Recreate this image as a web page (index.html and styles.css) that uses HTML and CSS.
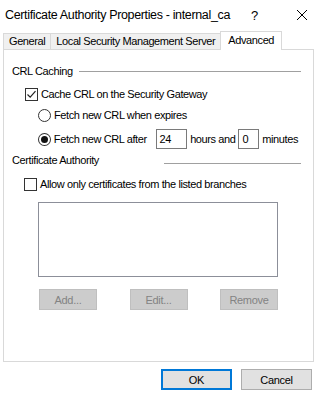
FILE: index.html
```html
<!DOCTYPE html>
<html lang="en">
<head>
  <meta charset="UTF-8">
  <title>Certificate Authority Properties - internal_ca</title>
  <link rel="stylesheet" href="styles.css">
</head>
<body>
  <div class="dialog">
    <div class="titlebar">
      <span class="title">Certificate Authority Properties - internal_ca</span>
      <span class="help">?</span>
      <span class="close">
        <svg width="12" height="12" viewBox="0 0 12 12"><path d="M1 1 L11 11 M11 1 L1 11" stroke="#000" stroke-width="1" fill="none"/></svg>
      </span>
    </div>
    <div class="tabs">
      <div class="tab">General</div>
      <div class="tab">Local Security Management Server</div>
      <div class="tab active">Advanced</div>
    </div>
    <div class="panel">
      <div class="group-head crl-head"><span>CRL Caching</span><span class="rule"></span></div>
      <label class="row check-row">
        <span class="checkbox checked">
          <svg width="11" height="11" viewBox="0 0 11 11"><path d="M1.5 5.5 L4.2 8.2 L9.5 2.2" stroke="#222" stroke-width="1.2" fill="none"/></svg>
        </span>
        Cache CRL on the Security Gateway
      </label>
      <label class="row radio-row first-radio">
        <span class="radio"></span>
        Fetch new CRL when expires
      </label>
      <div class="row radio-row second-radio">
        <span class="radio selected"><span class="dot"></span></span>
        <span class="after-label">Fetch new CRL after</span>
        <span class="field hours">24</span>
        <span class="unit">hours and</span>
        <span class="field mins">0</span>
        <span class="unit">minutes</span>
      </div>
      <div class="group-head ca-head"><span>Certificate Authority</span><span class="rule"></span></div>
      <label class="row check-row allow-row">
        <span class="checkbox"></span>
        Allow only certificates from the listed branches
      </label>
      <div class="listbox"></div>
      <div class="list-buttons">
        <button class="btn disabled">Add...</button>
        <button class="btn disabled">Edit...</button>
        <button class="btn disabled">Remove</button>
      </div>
    </div>
    <div class="footer">
      <button class="btn default">OK</button>
      <button class="btn">Cancel</button>
    </div>
  </div>
</body>
</html>
```

FILE: styles.css
```css
body {
  margin: 0;
  background: #fff;
  font-family: 'Liberation Sans', Arial, sans-serif;
  font-size: 11px;
  letter-spacing: -0.4px;
  color: #000;
}
.dialog {
  width: 320px;
  height: 400px;
  background: #fff;
}
.titlebar {
  height: 26px;
  display: flex;
  align-items: center;
  padding-left: 5px;
  padding-top: 4px;
  box-sizing: border-box;
  white-space: nowrap;
}
.title {
  font-size: 12.5px;
  letter-spacing: -0.35px;
  flex: 1;
}
.help {
  font-size: 13px;
  width: 14px;
  margin-right: 31px;
}
.close {
  width: 12px;
  height: 12px;
  margin-right: 12px;
  display: flex;
}
.tabs {
  display: flex;
  align-items: flex-end;
  margin-left: 3px;
  height: 23px;
  white-space: nowrap;
}
.tab {
  height: 15px;
  padding: 0 5px;
  border: 1px solid #d9d9d9;
  border-bottom: none;
  background: #f0f0f0;
  line-height: 15px;
  margin-right: -1px;
}
.tab.active {
  height: 18px;
  line-height: 16px;
  background: #fff;
  padding: 0 7px;
  position: relative;
  margin-bottom: -1px;
  z-index: 1;
}
.panel {
  margin-left: 3px;
  width: 311px;
  height: 313px;
  border: 1px solid #d9d9d9;
  box-sizing: border-box;
  padding: 13px 12px 0 8px;
  white-space: nowrap;
}
.group-head {
  display: flex;
  align-items: center;
  height: 16px;
}
.group-head .rule {
  flex: 1;
  height: 1px;
  background: #a0a0a0;
  margin-left: 6px;
}
.ca-head .rule {
  margin-left: 65px;
  margin-top: 6px;
}
.row {
  display: flex;
  align-items: center;
  height: 16px;
}
.check-row {
  margin-top: 7px;
  padding-left: 13px;
}
.first-radio {
  margin-top: 5px;
  padding-left: 26px;
}
.second-radio {
  margin-top: 6px;
  height: 20px;
  padding-left: 26px;
}
.checkbox {
  width: 11px;
  height: 11px;
  border: 1px solid #333;
  margin-right: 3px;
  display: flex;
  background: #fff;
}
.radio {
  width: 11px;
  height: 11px;
  border: 1px solid #333;
  border-radius: 50%;
  margin-right: 3px;
  display: flex;
  align-items: center;
  justify-content: center;
}
.radio .dot {
  width: 7px;
  height: 7px;
  border-radius: 50%;
  background: #111;
}
.after-label {
  width: 103px;
}
.field {
  height: 20px;
  border: 1px solid #7a7a7a;
  box-sizing: border-box;
  line-height: 18px;
  padding-left: 3px;
  margin-right: 3px;
}
.hours {
  width: 32px;
}
.mins {
  width: 21px;
}
.unit {
  margin-right: 3px;
}
.ca-head {
  margin-top: 3px;
}
.allow-row {
  margin-top: 8px;
  padding-left: 12px;
}
.listbox {
  margin: 10px 0 0 26px;
  width: 240px;
  height: 75px;
  border: 1px solid #8c8f99;
  box-sizing: border-box;
}
.list-buttons {
  display: flex;
  justify-content: space-between;
  width: 239px;
  margin: 12px 0 0 27px;
}
.btn {
  font-family: 'Liberation Sans', Arial, sans-serif;
  font-size: 11px;
  letter-spacing: -0.3px;
  height: 21px;
  width: 58px;
  border: 1px solid #adadad;
  background: #e1e1e1;
  color: #000;
  padding: 0;
}
.btn.disabled {
  background: #cccccc;
  border-color: #bfbfbf;
  color: #838383;
}
.footer {
  display: flex;
  justify-content: flex-end;
  gap: 9px;
  padding: 7px 8px 0 0;
}
.footer .btn {
  width: 71px;
}
.btn.default {
  border: 1px solid #0078d7;
  box-shadow: inset 0 0 0 1px #0078d7;
}
```
